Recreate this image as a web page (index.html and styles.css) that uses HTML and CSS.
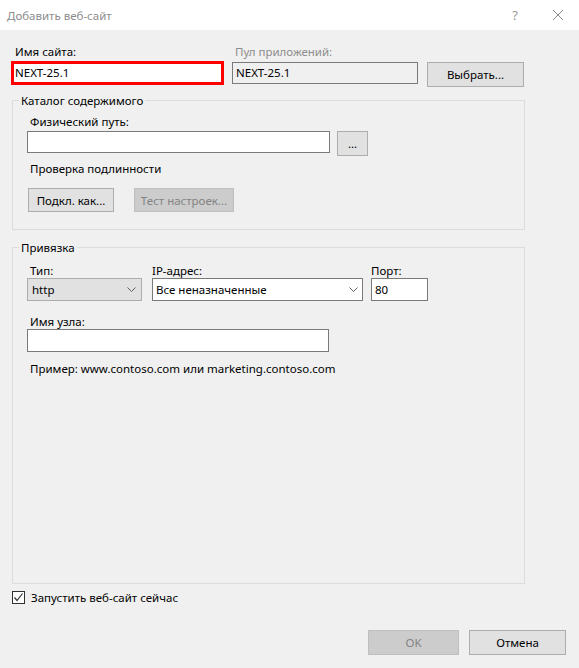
FILE: index.html
```html
<!DOCTYPE html>
<html lang="ru">
<head>
<meta charset="utf-8">
<title>Добавить веб-сайт</title>
<link rel="stylesheet" href="styles.css">
</head>
<body>
<div class="window">
  <div class="titlebar">
    <span class="title">Добавить веб-сайт</span>
    <span class="help">?</span>
    <span class="close"><svg width="12" height="12" viewBox="0 0 12 12"><path d="M1 1L11 11M11 1L1 11" stroke="#8a8a8a" stroke-width="1" fill="none"/></svg></span>
  </div>
  <div class="body">
    <div class="toprow">
      <div class="col site">
        <div class="label">Имя сайта:</div>
        <div class="input highlight">NEXT-25.1</div>
      </div>
      <div class="col pool">
        <div class="label disabled-label">Пул приложений:</div>
        <div class="input readonly">NEXT-25.1</div>
      </div>
      <div class="col pick">
        <div class="btn pick-btn">Выбрать...</div>
      </div>
    </div>

    <fieldset class="group catalog">
      <legend>Каталог содержимого</legend>
      <div class="label">Физический путь:</div>
      <div class="pathrow">
        <div class="input path"></div>
        <div class="btn dots">...</div>
      </div>
      <div class="label auth">Проверка подлинности</div>
      <div class="btnrow">
        <div class="btn connect">Подкл. как...</div>
        <div class="btn test disabled">Тест настроек...</div>
      </div>
    </fieldset>

    <fieldset class="group binding">
      <legend>Привязка</legend>
      <div class="bindrow">
        <div class="bcol type">
          <div class="label">Тип:</div>
          <div class="select gray">http<svg class="chev" width="9" height="5" viewBox="0 0 9 5"><path d="M0.5 0.5L4.5 4.5L8.5 0.5" stroke="#606060" fill="none"/></svg></div>
        </div>
        <div class="bcol ip">
          <div class="label">IP-адрес:</div>
          <div class="select white">Все неназначенные<svg class="chev" width="9" height="5" viewBox="0 0 9 5"><path d="M0.5 0.5L4.5 4.5L8.5 0.5" stroke="#606060" fill="none"/></svg></div>
        </div>
        <div class="bcol port">
          <div class="label">Порт:</div>
          <div class="input portin">80</div>
        </div>
      </div>
      <div class="label hostlabel">Имя узла:</div>
      <div class="input host"></div>
      <div class="label example">Пример: www.contoso.com или marketing.contoso.com</div>
    </fieldset>

    <div class="checkrow">
      <span class="checkbox"><svg width="11" height="11" viewBox="0 0 11 11"><path d="M1.5 5.5L4 8.5L9.5 1.5" stroke="#333" stroke-width="1.2" fill="none"/></svg></span>
      <span class="checklabel">Запустить веб-сайт сейчас</span>
    </div>

    <div class="footer">
      <div class="btn ok disabled">OK</div>
      <div class="btn cancel">Отмена</div>
    </div>
  </div>
</div>
</body>
</html>
```

FILE: styles.css
```css
* { box-sizing: border-box; }
html, body { margin: 0; padding: 0; }
body {
  width: 579px;
  height: 668px;
  background: #f0f0f0;
  font-family: "Noto Sans", "Open Sans", sans-serif;
  font-size: 11.5px;
  line-height: 15px;
  color: #000;
  overflow: hidden;
}
.window { width: 579px; height: 668px; display: flex; flex-direction: column; }
.titlebar {
  height: 30px;
  background: #fff;
  display: flex;
  align-items: center;
  padding-left: 7px;
  flex: none;
}
.title { color: #8c8c8c; flex: 1; }
.help { color: #999; width: 18px; text-align: center; margin-right: 28px; font-size: 13px; }
.close { width: 12px; height: 12px; margin-right: 15px; display: flex; }
.body { flex: 1; padding: 14px 0 0 11px; display: flex; flex-direction: column; }

.label { height: 15px; white-space: nowrap; }
.disabled-label { color: #8d8d8d; }
.input {
  background: #fff;
  border: 1px solid #7a7a7a;
  height: 22px;
  padding: 2px 3px;
  white-space: nowrap;
}
.btn {
  background: #e1e1e1;
  border: 1px solid #adadad;
  height: 25px;
  display: flex;
  align-items: center;
  justify-content: center;
  white-space: nowrap;
}
.btn.disabled { background: #cccccc; border-color: #bfbfbf; color: #838383; }

.toprow { display: flex; }
.col { display: flex; flex-direction: column; }
.site { width: 213px; margin-right: 8px; }
.site .label { padding-left: 4px; margin-bottom: 2px; }
.highlight { border: 3px solid #ff0000; height: 24px; padding: 1px 1px; }
.pool { width: 186px; margin-right: 9px; }
.pool .label { padding-left: 3px; margin-bottom: 3px; }
.readonly { background: #f0f0f0; }
.pick { width: 97px; padding-top: 18px; }

.group {
  margin: 0;
  border: 1px solid #dcdcdc;
  padding: 0 0 0 14px;
  width: 513px;
  margin-left: 1px;
}
.group legend { padding: 0 2px; margin-left: -8px; height: 15px; }
.catalog { margin-top: 6px; height: 137px; padding-top: 6px; }
.catalog > .label { padding-left: 3px; margin-bottom: 2px; }
.pathrow { display: flex; align-items: flex-start; }
.path { width: 303px; }
.dots { width: 31px; margin-left: 7px; }
.auth { margin-top: 5px; padding-left: 3px; }
.btnrow { display: flex; margin-top: 12px; margin-left: 1px; }
.connect { width: 86px; height: 24px; }
.test { width: 100px; height: 24px; margin-left: 20px; }

.binding { margin-top: 10px; height: 344px; padding-top: 8px; }
.bindrow { display: flex; }
.bcol { display: flex; flex-direction: column; }
.bcol .label { margin-bottom: 0; padding-left: 3px; }
.type { width: 115px; margin-right: 10px; }
.ip { width: 211px; margin-right: 8px; }
.ip .label { padding-left: 0; }
.port { width: 57px; }
.port .label { padding-left: 0; }
.select {
  height: 23px;
  display: flex;
  align-items: center;
  justify-content: space-between;
  padding: 0 5px 0 4px;
  white-space: nowrap;
}
.select.gray { background: #e1e1e1; border: 1px solid #adadad; }
.select.white { background: #fff; border: 1px solid #7a7a7a; padding-left: 3px; padding-right: 4px; }
.chev { flex: none; }
.portin { height: 23px; padding: 3px 3px; }
.hostlabel { margin-top: 13px; padding-left: 3px; margin-bottom: 0; }
.host { width: 302px; height: 23px; }
.example { margin-top: 9px; padding-left: 3px; }

.checkrow { display: flex; align-items: center; margin-top: 6px; margin-left: 1px; height: 14px; }
.checkbox {
  width: 13px; height: 13px;
  border: 1px solid #333;
  background: #fff;
  display: flex; align-items: center; justify-content: center;
}
.checklabel { margin-left: 6px; }

.footer { display: flex; justify-content: flex-end; margin-top: 26px; padding-right: 13px; }
.ok { width: 91px; }
.cancel { width: 97px; margin-left: 10px; }
```
